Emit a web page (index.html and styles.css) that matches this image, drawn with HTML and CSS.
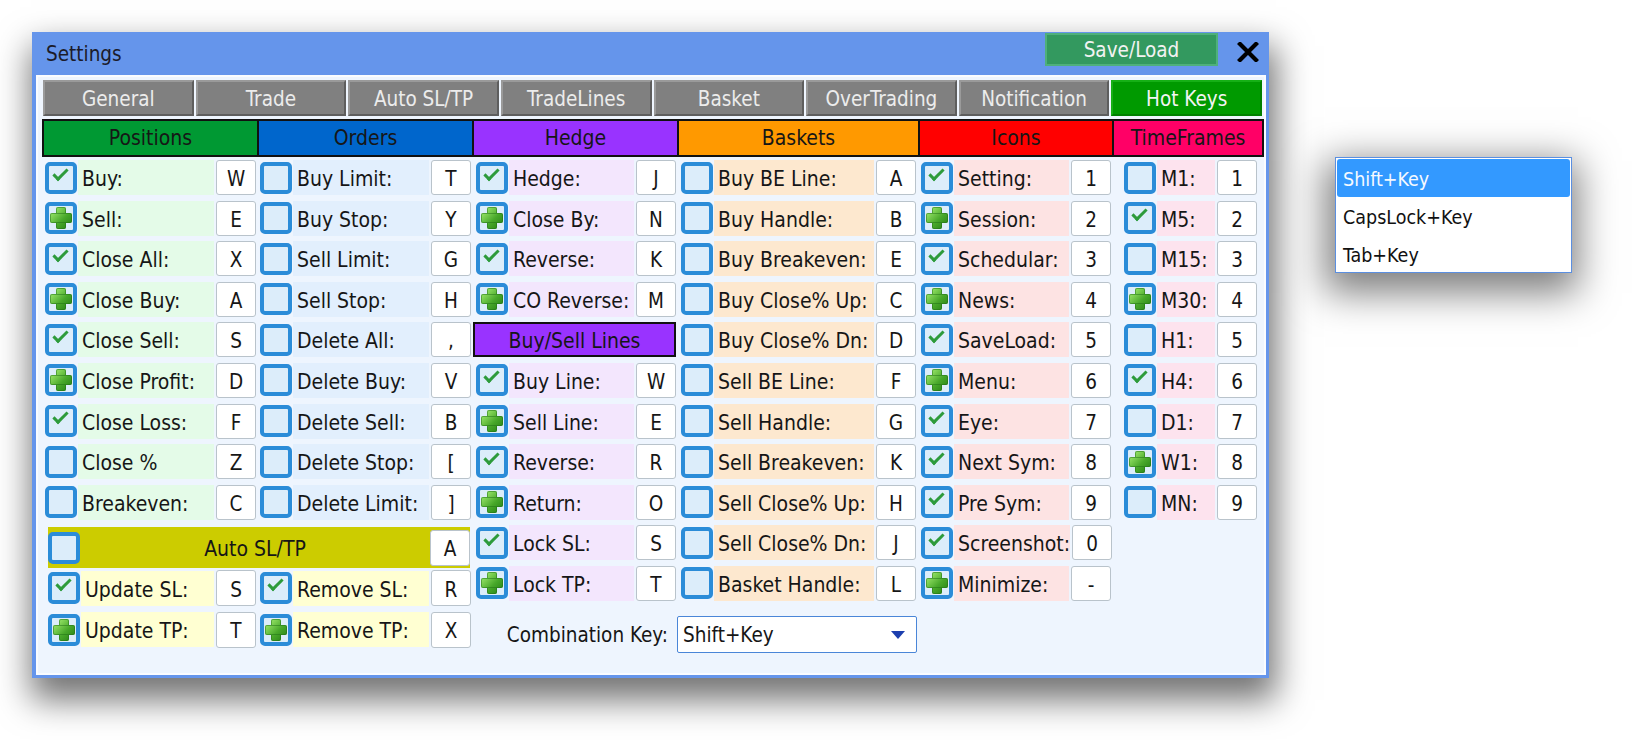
FILE: index.html
```html
<!DOCTYPE html>
<html>
  <head>
    <title>Settings</title>
    <link rel="stylesheet" href="styles.css">
  </head>
  <body>
    <div class="window">
      <div class="titlebar">
        <span class="title">Settings</span>
        <button class="btn-save">Save/Load</button>
        <span class="btn-close">
          <svg width="22" height="20" viewBox="0 0 22 20"><path d="M3 2 L19 18 M19 2 L3 18" stroke="#000" stroke-width="4.2" stroke-linecap="square"/></svg>
        </span>
      </div>
      <div class="panel">
        <div class="tabs">
          <div class="tab">General</div>
          <div class="tab">Trade</div>
          <div class="tab">Auto SL/TP</div>
          <div class="tab">TradeLines</div>
          <div class="tab">Basket</div>
          <div class="tab">OverTrading</div>
          <div class="tab">Notification</div>
          <div class="tab tab-active">Hot Keys</div>
        </div>

        <div class="heads">
          <div class="head head-pos">Positions</div>
          <div class="head head-ord">Orders</div>
          <div class="head head-hedge">Hedge</div>
          <div class="head head-bask">Baskets</div>
          <div class="head head-icon">Icons</div>
          <div class="head head-tf">TimeFrames</div>
        </div>

        <div class="content">
          <div class="group group-left">
            <div class="pair">
              <div class="col col-pos">
                <div class="row"><span class="cb ok"></span><span class="lbl">Buy:</span><span class="key">W</span></div>
                <div class="row"><span class="cb add"></span><span class="lbl">Sell:</span><span class="key">E</span></div>
                <div class="row"><span class="cb ok"></span><span class="lbl">Close All:</span><span class="key">X</span></div>
                <div class="row"><span class="cb add"></span><span class="lbl">Close Buy:</span><span class="key">A</span></div>
                <div class="row"><span class="cb ok"></span><span class="lbl">Close Sell:</span><span class="key">S</span></div>
                <div class="row"><span class="cb add"></span><span class="lbl">Close Profit:</span><span class="key">D</span></div>
                <div class="row"><span class="cb ok"></span><span class="lbl">Close Loss:</span><span class="key">F</span></div>
                <div class="row"><span class="cb"></span><span class="lbl">Close %</span><span class="key">Z</span></div>
                <div class="row"><span class="cb"></span><span class="lbl">Breakeven:</span><span class="key">C</span></div>
              </div>
              <div class="col col-ord">
                <div class="row"><span class="cb"></span><span class="lbl">Buy Limit:</span><span class="key">T</span></div>
                <div class="row"><span class="cb"></span><span class="lbl">Buy Stop:</span><span class="key">Y</span></div>
                <div class="row"><span class="cb"></span><span class="lbl">Sell Limit:</span><span class="key">G</span></div>
                <div class="row"><span class="cb"></span><span class="lbl">Sell Stop:</span><span class="key">H</span></div>
                <div class="row"><span class="cb"></span><span class="lbl">Delete All:</span><span class="key">,</span></div>
                <div class="row"><span class="cb"></span><span class="lbl">Delete Buy:</span><span class="key">V</span></div>
                <div class="row"><span class="cb"></span><span class="lbl">Delete Sell:</span><span class="key">B</span></div>
                <div class="row"><span class="cb"></span><span class="lbl">Delete Stop:</span><span class="key">[</span></div>
                <div class="row"><span class="cb"></span><span class="lbl">Delete Limit:</span><span class="key">]</span></div>
              </div>
            </div>

            <div class="auto-bar">
              <span class="cb"></span>
              <span class="auto-title">Auto SL/TP</span>
              <span class="key">A</span>
            </div>
            <div class="auto-row">
              <div class="row cell-a"><span class="cb ok"></span><span class="lbl">Update SL:</span><span class="key">S</span></div>
              <div class="row cell-b"><span class="cb ok"></span><span class="lbl">Remove SL:</span><span class="key">R</span></div>
            </div>
            <div class="auto-row">
              <div class="row cell-a"><span class="cb add"></span><span class="lbl">Update TP:</span><span class="key">T</span></div>
              <div class="row cell-b"><span class="cb add"></span><span class="lbl">Remove TP:</span><span class="key">X</span></div>
            </div>
          </div>

          <div class="group group-mid">
            <div class="pair">
              <div class="col col-hedge">
                <div class="row"><span class="cb ok"></span><span class="lbl">Hedge:</span><span class="key">J</span></div>
                <div class="row"><span class="cb add"></span><span class="lbl">Close By:</span><span class="key">N</span></div>
                <div class="row"><span class="cb ok"></span><span class="lbl">Reverse:</span><span class="key">K</span></div>
                <div class="row"><span class="cb add"></span><span class="lbl">CO Reverse:</span><span class="key">M</span></div>
                <div class="subhead">Buy/Sell Lines</div>
                <div class="row"><span class="cb ok"></span><span class="lbl">Buy Line:</span><span class="key">W</span></div>
                <div class="row"><span class="cb add"></span><span class="lbl">Sell Line:</span><span class="key">E</span></div>
                <div class="row"><span class="cb ok"></span><span class="lbl">Reverse:</span><span class="key">R</span></div>
                <div class="row"><span class="cb add"></span><span class="lbl">Return:</span><span class="key">O</span></div>
                <div class="row"><span class="cb ok"></span><span class="lbl">Lock SL:</span><span class="key">S</span></div>
                <div class="row"><span class="cb add"></span><span class="lbl">Lock TP:</span><span class="key">T</span></div>
              </div>
              <div class="col col-bask">
                <div class="row"><span class="cb"></span><span class="lbl">Buy BE Line:</span><span class="key">A</span></div>
                <div class="row"><span class="cb"></span><span class="lbl">Buy Handle:</span><span class="key">B</span></div>
                <div class="row"><span class="cb"></span><span class="lbl">Buy Breakeven:</span><span class="key">E</span></div>
                <div class="row"><span class="cb"></span><span class="lbl">Buy Close% Up:</span><span class="key">C</span></div>
                <div class="row"><span class="cb"></span><span class="lbl">Buy Close% Dn:</span><span class="key">D</span></div>
                <div class="row"><span class="cb"></span><span class="lbl">Sell BE Line:</span><span class="key">F</span></div>
                <div class="row"><span class="cb"></span><span class="lbl">Sell Handle:</span><span class="key">G</span></div>
                <div class="row"><span class="cb"></span><span class="lbl">Sell Breakeven:</span><span class="key">K</span></div>
                <div class="row"><span class="cb"></span><span class="lbl">Sell Close% Up:</span><span class="key">H</span></div>
                <div class="row"><span class="cb"></span><span class="lbl">Sell Close% Dn:</span><span class="key">J</span></div>
                <div class="row"><span class="cb"></span><span class="lbl">Basket Handle:</span><span class="key">L</span></div>
              </div>
            </div>
            <div class="combo">
              <span class="combo-label">Combination Key:</span>
              <div class="select">
                <span>Shift+Key</span>
                <svg width="14" height="9" viewBox="0 0 14 9"><path d="M0 0 H14 L7 8 Z" fill="#1c3fae"/></svg>
              </div>
            </div>
          </div>

          <div class="col col-icon">
            <div class="row"><span class="cb ok"></span><span class="lbl">Setting:</span><span class="key">1</span></div>
            <div class="row"><span class="cb add"></span><span class="lbl">Session:</span><span class="key">2</span></div>
            <div class="row"><span class="cb ok"></span><span class="lbl">Schedular:</span><span class="key">3</span></div>
            <div class="row"><span class="cb add"></span><span class="lbl">News:</span><span class="key">4</span></div>
            <div class="row"><span class="cb ok"></span><span class="lbl">SaveLoad:</span><span class="key">5</span></div>
            <div class="row"><span class="cb add"></span><span class="lbl">Menu:</span><span class="key">6</span></div>
            <div class="row"><span class="cb ok"></span><span class="lbl">Eye:</span><span class="key">7</span></div>
            <div class="row"><span class="cb ok"></span><span class="lbl">Next Sym:</span><span class="key">8</span></div>
            <div class="row"><span class="cb ok"></span><span class="lbl">Pre Sym:</span><span class="key">9</span></div>
            <div class="row"><span class="cb ok"></span><span class="lbl">Screenshot:</span><span class="key">0</span></div>
            <div class="row"><span class="cb add"></span><span class="lbl">Minimize:</span><span class="key">-</span></div>
          </div>

          <div class="col col-tf">
            <div class="row"><span class="cb"></span><span class="lbl">M1:</span><span class="key">1</span></div>
            <div class="row"><span class="cb ok"></span><span class="lbl">M5:</span><span class="key">2</span></div>
            <div class="row"><span class="cb"></span><span class="lbl">M15:</span><span class="key">3</span></div>
            <div class="row"><span class="cb add"></span><span class="lbl">M30:</span><span class="key">4</span></div>
            <div class="row"><span class="cb"></span><span class="lbl">H1:</span><span class="key">5</span></div>
            <div class="row"><span class="cb ok"></span><span class="lbl">H4:</span><span class="key">6</span></div>
            <div class="row"><span class="cb"></span><span class="lbl">D1:</span><span class="key">7</span></div>
            <div class="row"><span class="cb add"></span><span class="lbl">W1:</span><span class="key">8</span></div>
            <div class="row"><span class="cb"></span><span class="lbl">MN:</span><span class="key">9</span></div>
          </div>
        </div>
      </div>
    </div>

    <ul class="droplist">
      <li class="drop-item drop-selected">Shift+Key</li>
      <li class="drop-item">CapsLock+Key</li>
      <li class="drop-item">Tab+Key</li>
    </ul>
  </body>
</html>
```

FILE: styles.css
```css
html, body {
  min-height: 740px;
}
body {
  margin: 0;
  padding-top: 32px;
  box-sizing: border-box;
  background: #fff;
  font-family: "DejaVu Sans Condensed", "DejaVu Sans", sans-serif;
  font-stretch: condensed;
  color: #161616;
}
.window {
  position: relative;
  width: 1237px;
  margin-left: 32px;
  padding: 0 3px 3px 4px;
  box-sizing: border-box;
  background: #6595eb;
  box-shadow: 3px 18px 32px 4px rgba(0, 0, 0, 0.55);
}
.titlebar {
  display: flex;
  align-items: flex-start;
  height: 43px;
}
.title {
  align-self: center;
  margin-left: 10px;
  font-size: 20.5px;
  color: #1b1b2a;
}
.btn-save {
  margin: 1px 0 0 auto;
  width: 173px;
  height: 33px;
  background: #33995f;
  border: 2px solid #4fb07b;
  color: #f2f2f2;
  font-family: inherit;
  font-size: 20.5px;
  padding: 0;
}
.btn-close {
  margin: 10px 7px 0 19px;
  width: 22px;
  height: 20px;
}
.panel {
  height: 596px;
  border: 2px solid #fafcff;
  background: #eef5fe;
}
.tabs {
  display: flex;
  gap: 2px;
  margin: 3px 2px 0 5px;
}
.tab {
  flex: 1;
  height: 36px;
  box-sizing: border-box;
  padding-top: 1px;
  background: #808080;
  border: 2px solid;
  border-color: #9a9a9a #5e5e5e #5e5e5e #9a9a9a;
  color: #ececec;
  font-size: 20.5px;
  display: flex;
  align-items: center;
  justify-content: center;
}
.tab-active {
  background: #009a00;
  border-color: #16b016 #008000 #008000 #16b016;
  color: #f4f4f4;
}
.heads {
  display: flex;
  margin: 3px 0 0 4px;
}
.head {
  height: 38px;
  box-sizing: border-box;
  border: 2px solid #111;
  border-right: none;
  font-size: 21px;
  display: flex;
  align-items: center;
  justify-content: center;
}
.head-pos { width: 215px; background: #009933; }
.head-ord { width: 215px; background: #0066cc; }
.head-hedge { width: 205px; background: #9933ff; }
.head-bask { width: 241px; background: #ff9900; }
.head-icon { width: 194px; background: #ff0000; }
.head-tf { width: 152px; background: #ff0066; border-right: 2px solid #111; }

.content {
  display: flex;
  align-items: flex-start;
  margin: 3px 0 0 4px;
}
.pair {
  display: flex;
}
.col {
  box-sizing: border-box;
}
.col-pos, .col-ord { width: 215px; padding: 0 1px 0 3px; }
.col-hedge { width: 205px; padding: 0 1px 0 4px; }
.col-bask { width: 241px; padding: 0 2px 0 4px; }
.col-icon { width: 194px; padding: 0 1px 0 3px; }
.col-tf { width: 152px; padding: 0 7px 0 12px; }

.row {
  display: flex;
  align-items: center;
  height: 35px;
  margin-bottom: 5.6px;
}
.lbl {
  flex: 1;
  height: 35px;
  box-sizing: border-box;
  margin: 0 2px 0 1px;
  padding: 3px 0 0 4px;
  display: flex;
  align-items: center;
  font-size: 21px;
  white-space: nowrap;
}
.col-pos .lbl { background: #e4fbe8; }
.col-ord .lbl { background: #e2effd; }
.col-hedge .lbl { background: #f3e6fd; }
.col-bask .lbl { background: #fde8cf; }
.col-icon .lbl { background: #fde3e3; }
.col-tf .lbl { background: #fde3ee; }
.auto-row .lbl { background: #ffffd2; }

.key {
  flex: none;
  width: 40px;
  height: 35px;
  box-sizing: border-box;
  padding-top: 3px;
  background: #fff;
  border: 1px solid #b9c3cb;
  border-radius: 3px;
  display: flex;
  align-items: center;
  justify-content: center;
  font-size: 20.5px;
}

.cb {
  flex: none;
  position: relative;
  width: 32px;
  height: 32px;
  box-sizing: border-box;
  border: 4px solid #2b8cd8;
  border-radius: 5px;
  background: #dcedfa;
}
.cb.ok::after {
  content: "";
  position: absolute;
  left: 4px;
  top: 3px;
  width: 12px;
  height: 5px;
  border-left: 3.5px solid #2d9b3b;
  border-bottom: 3.5px solid #2d9b3b;
  transform: rotate(-45deg);
}
.cb.add::before,
.cb.add::after {
  content: "";
  position: absolute;
  border-radius: 2px;
  background: linear-gradient(135deg, #9ae66a, #48a82a 60%, #2f8a1a);
  box-shadow: inset 0 0 0 1px rgba(30, 110, 20, 0.5);
}
.cb.add::before {
  left: 7px;
  top: 1px;
  width: 10px;
  height: 22px;
}
.cb.add::after {
  left: 1px;
  top: 7px;
  width: 22px;
  height: 10px;
}

.subhead {
  height: 35px;
  margin: 0 0 5.6px -3px;
  box-sizing: border-box;
  padding-top: 2px;
  border: 2px solid #111;
  background: #9933ff;
  font-size: 21px;
  display: flex;
  align-items: center;
  justify-content: center;
}

.auto-bar {
  display: flex;
  align-items: center;
  height: 41px;
  width: 422px;
  margin: 2px 0 2px 6px;
  background: #cccc00;
}
.auto-title {
  flex: 1;
  padding-top: 3px;
  text-align: center;
  font-size: 21px;
}
.auto-bar .key {
  height: 36px;
}
.auto-row {
  display: flex;
}
.auto-row .row {
  height: 36px;
}
.auto-row .key {
  height: 36px;
}
.cell-a {
  width: 215px;
  box-sizing: border-box;
  padding: 0 1px 0 6px;
}
.cell-b {
  width: 215px;
  box-sizing: border-box;
  padding: 0 1px 0 3px;
}

.combo {
  display: flex;
  align-items: center;
  justify-content: flex-end;
  margin-top: 9px;
  padding-right: 1px;
}
.combo-label {
  padding-top: 2px;
  font-size: 20.5px;
}
.select {
  margin-left: 9px;
  width: 240px;
  height: 37px;
  box-sizing: border-box;
  background: #fff;
  border: 1px solid #4a86d8;
  border-radius: 2px;
  padding: 2px 11px 0 5px;
  display: flex;
  align-items: center;
  justify-content: space-between;
  font-size: 20.5px;
}

.droplist {
  position: absolute;
  left: 1335px;
  top: 157px;
  width: 237px;
  height: 116px;
  box-sizing: border-box;
  margin: 0;
  padding: 1px;
  list-style: none;
  background: #fff;
  border: 1px solid #5b8fe0;
  box-shadow: -2px 12px 36px 8px rgba(0, 0, 0, 0.5);
}
.drop-item {
  height: 38px;
  padding: 2px 0 0 6px;
  box-sizing: border-box;
  display: flex;
  align-items: center;
  font-size: 19.5px;
  color: #111;
}
.drop-selected {
  background: #3399ff;
  border-radius: 3px;
  color: #f6f9ff;
}
```
